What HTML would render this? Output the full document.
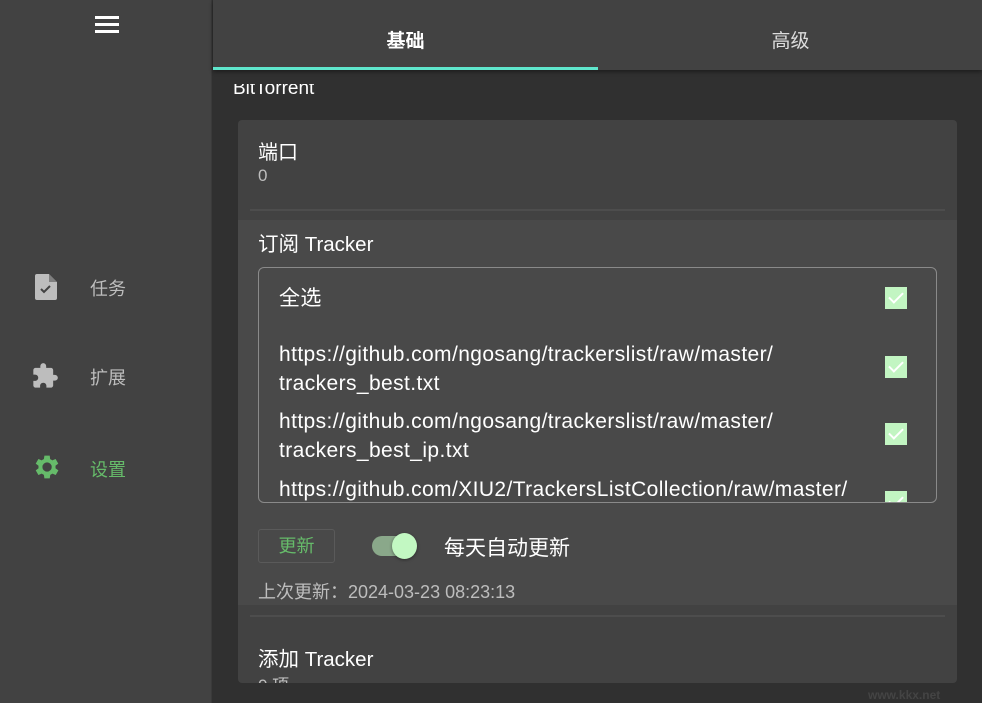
<!DOCTYPE html>
<html><head><meta charset="utf-8"><style>
*{margin:0;padding:0;box-sizing:border-box}
body{width:982px;height:703px;overflow:hidden;background:#303030;font-family:"Liberation Sans","Noto Sans CJK SC",sans-serif;color:#fff;position:relative}
.side{position:absolute;left:0;top:0;width:212px;height:703px;background:#424242;border-right:1px solid #3a3a3a}
.nav{position:absolute;left:32px;font-size:18px;color:#bdbdbd}
.nav span{position:absolute;left:58px;top:-2px;white-space:nowrap}
.tabs{position:absolute;left:213px;top:0;width:769px;height:70px;background:#424242;box-shadow:0 2px 4px rgba(0,0,0,.4)}
.tab{position:absolute;top:26px;font-size:19px;width:385px;text-align:center}
.ind{position:absolute;left:0;top:67px;width:385px;height:3px;background:#5fe6cc}
.card{position:absolute;left:238px;top:120px;width:719px;height:563px;background:#424242;border-radius:4px;overflow:hidden}
.t{position:absolute;font-size:20px;white-space:nowrap}
.g{color:#bdbdbd}
.hr{position:absolute;left:12px;width:695px;height:2px;background:#4d4d4d}
.sub{position:absolute;left:0;top:100px;width:719px;height:385px;background:#494949}
.box{position:absolute;left:20px;top:47px;width:679px;height:236px;border:1.5px solid #8a8a8a;border-radius:6px;overflow:hidden}
.cb{position:absolute;left:626px;width:22px;height:22px;background:#c2f5c2}
.cb:after{content:"";position:absolute;left:7px;top:2px;width:6px;height:12px;border:solid #fff;border-width:0 2.5px 2.5px 0;transform:rotate(45deg)}
.li{position:absolute;left:20px;font-size:21px;letter-spacing:0.4px;line-height:29px;color:#fff;white-space:nowrap}
</style></head><body>
<div class="side">
 <svg style="position:absolute;left:95px;top:16px" width="24" height="18"><rect y="0" width="24" height="3" fill="#fff"/><rect y="7" width="24" height="3" fill="#fff"/><rect y="14" width="24" height="3" fill="#fff"/></svg>
 <div class="nav" style="top:274px"><svg width="22" height="26" viewBox="0 0 22 26" style="margin-left:3px"><path d="M2 0h12l8 8v16a2 2 0 0 1-2 2H2a2 2 0 0 1-2-2V2a2 2 0 0 1 2-2z" fill="#bdbdbd"/><path d="M14 0v8h8z" fill="#424242" opacity=".5"/><path d="M6 15l3 3 6-6" stroke="#424242" stroke-width="2" fill="none"/></svg><span style="top:1px">任务</span></div>
 <div class="nav" style="top:362px"><svg width="28" height="28" viewBox="0 0 24 24" style="margin-left:-1px"><path fill="#bdbdbd" d="M20.5 11H19V7c0-1.1-.9-2-2-2h-4V3.5a2.5 2.5 0 0 0-5 0V5H4c-1.1 0-2 .9-2 2v3.8h1.5c1.5 0 2.7 1.2 2.7 2.7S5 16.2 3.5 16.2H2V20c0 1.1.9 2 2 2h3.8v-1.5c0-1.5 1.2-2.7 2.7-2.7s2.7 1.2 2.7 2.7V22H17c1.1 0 2-.9 2-2v-4h1.5a2.5 2.5 0 0 0 0-5z"/></svg><span style="top:2px">扩展</span></div>
 <div class="nav" style="top:453px;color:#66bb6a"><svg width="28" height="28" viewBox="1.5 1.5 21 21"><path fill="#66bb6a" d="M19.1 12.9a7 7 0 0 0 0-1.8l2.1-1.6-2-3.5-2.5 1a7 7 0 0 0-1.6-.9L14.8 3.5h-4l-.4 2.6a7 7 0 0 0-1.6.9l-2.5-1-2 3.5 2.1 1.6a7 7 0 0 0 0 1.8l-2.1 1.6 2 3.5 2.5-1a7 7 0 0 0 1.6.9l.4 2.6h4l.4-2.6a7 7 0 0 0 1.6-.9l2.5 1 2-3.5zM12.8 15.5a3.5 3.5 0 1 1 0-7 3.5 3.5 0 0 1 0 7z"/></svg><span style="top:3px">设置</span></div>
</div>
<div style="position:absolute;left:213px;top:84px;width:769px;height:30px;overflow:hidden"><div style="position:absolute;left:20px;top:-6px;font-size:19px;color:#fff">BitTorrent</div></div>
<div class="card">
 <div class="t" style="left:20px;top:16px">端口</div>
 <div class="t g" style="left:20px;top:46px;font-size:17px">0</div>
 <div class="hr" style="top:89px"></div>
 <div class="sub">
  <div class="t" style="left:20px;top:7px;font-size:20.5px">订阅 Tracker</div>
  <div class="box">
   <div class="li" style="top:16px">全选</div><div class="cb" style="top:19px"></div>
   <div class="li" style="top:72px">https://github.com/ngosang/trackerslist/raw/master/<br>trackers_best.txt</div><div class="cb" style="top:88px"></div>
   <div class="li" style="top:139px">https://github.com/ngosang/trackerslist/raw/master/<br>trackers_best_ip.txt</div><div class="cb" style="top:155px"></div>
   <div class="li" style="top:207px">https://github.com/XIU2/TrackersListCollection/raw/master/</div><div class="cb" style="top:223px"></div>
  </div>
  <div style="position:absolute;left:20px;top:309px;width:77px;height:34px;border:1px solid #5a5a5a;border-radius:3px;color:#66bb6a;font-size:18px;text-align:center;line-height:32px">更新</div>
  <div style="position:absolute;left:134px;top:316px;width:36px;height:20px;border-radius:10px;background:#8aa88a"></div>
  <div style="position:absolute;left:154px;top:313px;width:25px;height:26px;border-radius:50%;background:#c2f8c2;box-shadow:0 1px 3px rgba(0,0,0,.4)"></div>
  <div class="t" style="left:206px;top:312px;font-size:21px">每天自动更新</div>
  <div class="t g" style="left:20px;top:358px;font-size:18px">上次更新：2024-03-23 08:23:13</div>
 </div>
 <div class="hr" style="top:495px"></div>
 <div class="t" style="left:20px;top:522px;font-size:20.5px">添加 Tracker</div>
 <div class="t g" style="left:20px;top:551px;font-size:17px">0 项</div>
</div>
<div class="tabs"><div class="tab" style="left:0;font-weight:bold">基础</div><div class="tab" style="left:385px;color:#ddd">高级</div><div class="ind"></div></div>
<div style="position:absolute;left:868px;top:688px;font-size:12px;color:#444;font-weight:bold">www.kkx.net</div>
</body></html>
